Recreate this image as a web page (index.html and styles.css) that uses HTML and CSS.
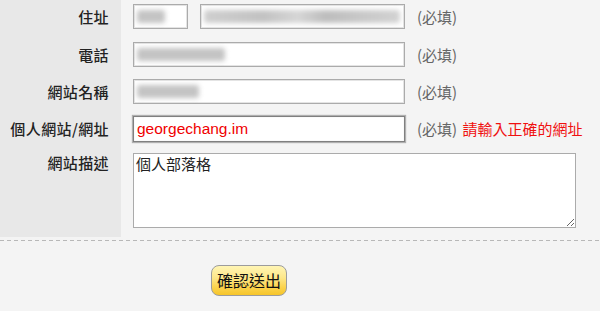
FILE: index.html
```html
<!DOCTYPE html>
<html lang="zh-Hant">
<head>
<meta charset="utf-8">
<link rel="stylesheet" href="styles.css">
</head>
<body>
<form class="form">
  <div class="rows">
    <div class="row row-first">
      <div class="label">住址</div>
      <div class="field">
        <span class="box"><input class="input input-zip" type="text"><span class="blur blur-zip"></span></span>
        <span class="box"><input class="input input-addr" type="text"><span class="blur blur-addr"></span></span>
        <span class="req">(必填)</span>
      </div>
    </div>
    <div class="row">
      <div class="label">電話</div>
      <div class="field">
        <span class="box"><input class="input input-wide" type="text"><span class="blur blur-phone"></span></span>
        <span class="req">(必填)</span>
      </div>
    </div>
    <div class="row">
      <div class="label">網站名稱</div>
      <div class="field">
        <span class="box"><input class="input input-wide" type="text"><span class="blur blur-name"></span></span>
        <span class="req">(必填)</span>
      </div>
    </div>
    <div class="row row-url">
      <div class="label">個人網站/網址</div>
      <div class="field">
        <input class="input input-wide input-error" type="text" value="georgechang.im">
        <span class="req">(必填) <span class="err">請輸入正確的網址</span></span>
      </div>
    </div>
    <div class="row row-desc">
      <div class="label">網站描述</div>
      <div class="field">
        <textarea class="textarea">個人部落格</textarea>
      </div>
    </div>
  </div>
  <div class="divider"></div>
  <div class="actions">
    <button class="submit" type="button">確認送出</button>
  </div>
</form>
</body>
</html>
```

FILE: styles.css
```css
html, body {
  margin: 0;
  padding: 0;
  background: #f4f4f4;
  font-family: "Noto Sans CJK TC", "Liberation Sans", sans-serif;
}

.form {
  width: 600px;
}

.rows {
  display: flex;
  flex-direction: column;
}

.row {
  display: grid;
  grid-template-columns: 121px 1fr;
}

.label {
  background: #e8e8e8;
  text-align: right;
  padding: 0 12px 0 0;
  font-size: 15px;
  line-height: 25px;
  font-weight: 500;
  letter-spacing: 0.4px;
  color: #222;
  white-space: nowrap;
}

.field {
  display: flex;
  align-items: flex-start;
  gap: 12px;
  padding: 0 0 12px 12px;
}

.row-first .label { padding-top: 4px; }
.row-first .field { padding-top: 4px; padding-bottom: 13px; }
.row-url .field { padding-bottom: 11px; }
.row-desc .field { padding-bottom: 9px; }
.row-desc .label { line-height: 20px; }

.box {
  position: relative;
  display: block;
}

.input {
  display: block;
  box-sizing: border-box;
  height: 25px;
  margin: 0;
  padding: 0 3px;
  border: 1px solid #ababab;
  box-shadow: inset 0 0 0 1px #e4e4e4;
  background: #fff;
  font-family: "Liberation Sans", sans-serif;
  font-size: 15.5px;
  outline: none;
}

.input-zip { width: 55px; }
.input-addr { width: 205px; }
.input-wide { width: 272px; }

.input-error {
  height: 26px;
  color: #f00000;
  border: 1px solid #808080;
  box-shadow: 0 0 1px 1px rgba(0, 0, 0, 0.28), inset 0 0 1px rgba(0,0,0,0.2);
}

.blur {
  position: absolute;
  top: 6px;
  height: 13px;
  background: #c4c4c4;
  filter: blur(2.5px);
  border-radius: 3px;
}

.blur-zip { left: 4px; width: 28px; }
.blur-addr {
  left: 4px;
  width: 196px;
  background: linear-gradient(90deg, #cfcfcf 0%, #c2c2c2 30%, #d6d6d6 48%, #bdbdbd 62%, #c8c8c8 80%, #d2d2d2 100%);
}
.blur-phone { left: 4px; width: 88px; }
.blur-name { left: 4px; width: 62px; }

.req {
  font-size: 15px;
  line-height: 25px;
  color: #666;
  white-space: nowrap;
}

.err {
  color: #f01010;
  margin-left: 2px;
}

.textarea {
  display: block;
  box-sizing: border-box;
  width: 443px;
  height: 75px;
  margin: 0;
  padding: 0 2px;
  border: 1px solid #ababab;
  background: #fff;
  font-family: "Noto Sans CJK TC", sans-serif;
  font-size: 15px;
  line-height: 20px;
  color: #222;
  outline: none;
}

.divider {
  margin-top: 3px;
  height: 1px;
  background: repeating-linear-gradient(90deg, #b8b8b8 0 4px, transparent 4px 7px);
}

.actions {
  padding: 24px 0 0 211px;
}

.submit {
  box-sizing: border-box;
  width: 76px;
  height: 31px;
  margin: 0;
  padding: 0;
  border: 1px solid #9c9c9c;
  border-radius: 8px;
  background: linear-gradient(#fff5b4 0%, #fde78a 40%, #fbd24a 75%, #f6c52a 100%);
  font-family: "Noto Sans CJK TC", sans-serif;
  font-size: 16px;
  color: #111;
  line-height: 29px;
}
```
